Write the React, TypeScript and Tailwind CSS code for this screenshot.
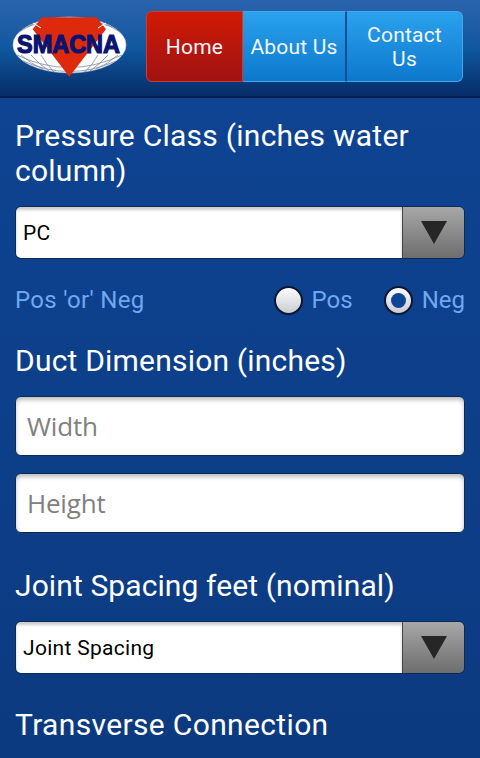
import { ReactNode } from "react";

function Logo() {
  return (
    <svg width="118" height="64" viewBox="0 0 118 64" className="shrink-0 overflow-visible">
      <ellipse cx="58.5" cy="31" rx="56.5" ry="28" fill="#fff" stroke="#c9d3e4" strokeWidth="0.6" />
      <g fill="none" stroke="#7d88a0" strokeWidth="0.8">
        <path d="M6 41 Q58 66 111 41" />
        <path d="M12 47 Q58 68 105 47" />
        <path d="M10 41 Q20 50 32 55" />
        <path d="M20 41 Q28 50 38 57" />
        <path d="M30 41 Q35 50 43 58" />
        <path d="M107 41 Q97 50 85 55" />
        <path d="M97 41 Q89 50 79 57" />
        <path d="M87 41 Q82 50 74 58" />
        <path d="M16 13 Q58 -3 101 13" />
        <path d="M8 18 L22 10" />
        <path d="M109 18 L95 10" />
      </g>
      <path d="M30.7 3.3 H85.7 L95 15.3 L58.3 62.7 L21.7 15.3 Z" fill="#dd2a0c" />
      <path d="M22 9 L30 14 M95 9 L87 14" stroke="#fff" strokeWidth="1" />
      <text x="57.5" y="39" textAnchor="middle" fontFamily="'Liberation Sans', sans-serif" fontWeight="700" fontSize="25" textLength="103" lengthAdjust="spacingAndGlyphs" fill="#0a1470" stroke="#0a1470" strokeWidth="1.2">SMACNA</text>
    </svg>
  );
}

function SelectBox({ label }: { label: string }) {
  return (
    <div className="flex h-[53px] rounded-[6px] border border-[#0d2a55] overflow-hidden">
      <div className="flex-1 bg-white flex items-center px-[7px] pt-[2px] text-[21px] tracking-[0.3px] text-black shadow-[inset_0_3px_3px_rgba(0,0,0,0.2)]">{label}</div>
      <div className="w-[62px] flex items-center justify-center bg-gradient-to-b from-[#a8a8a8] to-[#6e6e6e] border-l border-[#444]">
        <svg width="28" height="24" viewBox="0 0 28 24">
          <path d="M1 0 H27 L14 23 Z" fill="#262626" />
        </svg>
      </div>
    </div>
  );
}

function TextBox({ placeholder }: { placeholder: string }) {
  return (
    <div className="h-[60px] rounded-[6px] bg-white border border-[#0d2a55] flex items-center px-[11px] font-['Open_Sans',sans-serif] text-[26px] tracking-[-0.2px] text-[#808080] shadow-[inset_0_3px_4px_rgba(0,0,0,0.25)]">
      {placeholder}
    </div>
  );
}

function Radio({ checked, children }: { checked?: boolean; children: ReactNode }) {
  return (
    <div className="flex items-center gap-[9px]">
      <div className="w-[29px] h-[29px] rounded-full border-2 border-[#0b1730] bg-gradient-to-b from-[#fdfdfd] to-[#c9ccd2] flex items-center justify-center">
        {checked && <div className="w-[15px] h-[15px] rounded-full bg-[#0f4596]" />}
      </div>
      <span>{children}</span>
    </div>
  );
}

export default function App() {
  return (
    <div className="w-[480px] h-[758px] overflow-hidden bg-gradient-to-b from-[#0e4595] to-[#0c3a80] text-white font-['Roboto',sans-serif]">
      <header className="h-[98px] flex items-start bg-gradient-to-b from-[#2a63ad] via-[#0f589f] to-[#082c68] border-b-2 border-[#051d4c]">
        <div className="mt-[14px] ml-[11px] mr-[17px]">
          <Logo />
        </div>
        <nav className="mt-[11px] flex h-[71px] w-[317px] text-[21px] tracking-[0.2px] leading-[24px] text-[#f2f7fc]">
          <div className="w-[97px] flex items-center justify-center rounded-l-[6px] border border-[#d8382a] bg-gradient-to-b from-[#d11a02] to-[#a01212]">Home</div>
          <div className="w-[104px] flex items-center justify-center border-y border-[#45a6ea] bg-gradient-to-b from-[#2aa2ee] to-[#0c78cc] border-r-2 border-r-[#0a4f98]">About Us</div>
          <div className="flex-1 flex items-center justify-center text-center rounded-r-[6px] border border-l-0 border-[#45a6ea] bg-gradient-to-b from-[#2aa2ee] to-[#0c78cc] px-[10px]">Contact Us</div>
        </nav>
      </header>
      <main className="px-[15px]">
        <h2 className="mt-[20px] text-[30px] leading-[35px] tracking-[0.25px]">Pressure Class (inches water column)</h2>
        <div className="mt-[18px]">
          <SelectBox label="PC" />
        </div>
        <div className="mt-[24px] flex items-center justify-between text-[24px] tracking-[0.3px] leading-[34px] text-[#6fa8ef]">
          <span>Pos 'or' Neg</span>
          <div className="flex items-center gap-[31px] tracking-normal">
            <Radio>Pos</Radio>
            <Radio checked>Neg</Radio>
          </div>
        </div>
        <h2 className="mt-[26px] text-[30px] leading-[35px] tracking-[0.2px]">Duct Dimension (inches)</h2>
        <div className="mt-[18px] flex flex-col gap-[17px]">
          <TextBox placeholder="Width" />
          <TextBox placeholder="Height" />
        </div>
        <h2 className="mt-[35px] text-[30px] leading-[35px] tracking-[0.1px]">Joint Spacing feet (nominal)</h2>
        <div className="mt-[18px]">
          <SelectBox label="Joint Spacing" />
        </div>
        <h2 className="mt-[33px] text-[30px] leading-[35px] tracking-[0.35px]">Transverse Connection</h2>
      </main>
    </div>
  );
}
